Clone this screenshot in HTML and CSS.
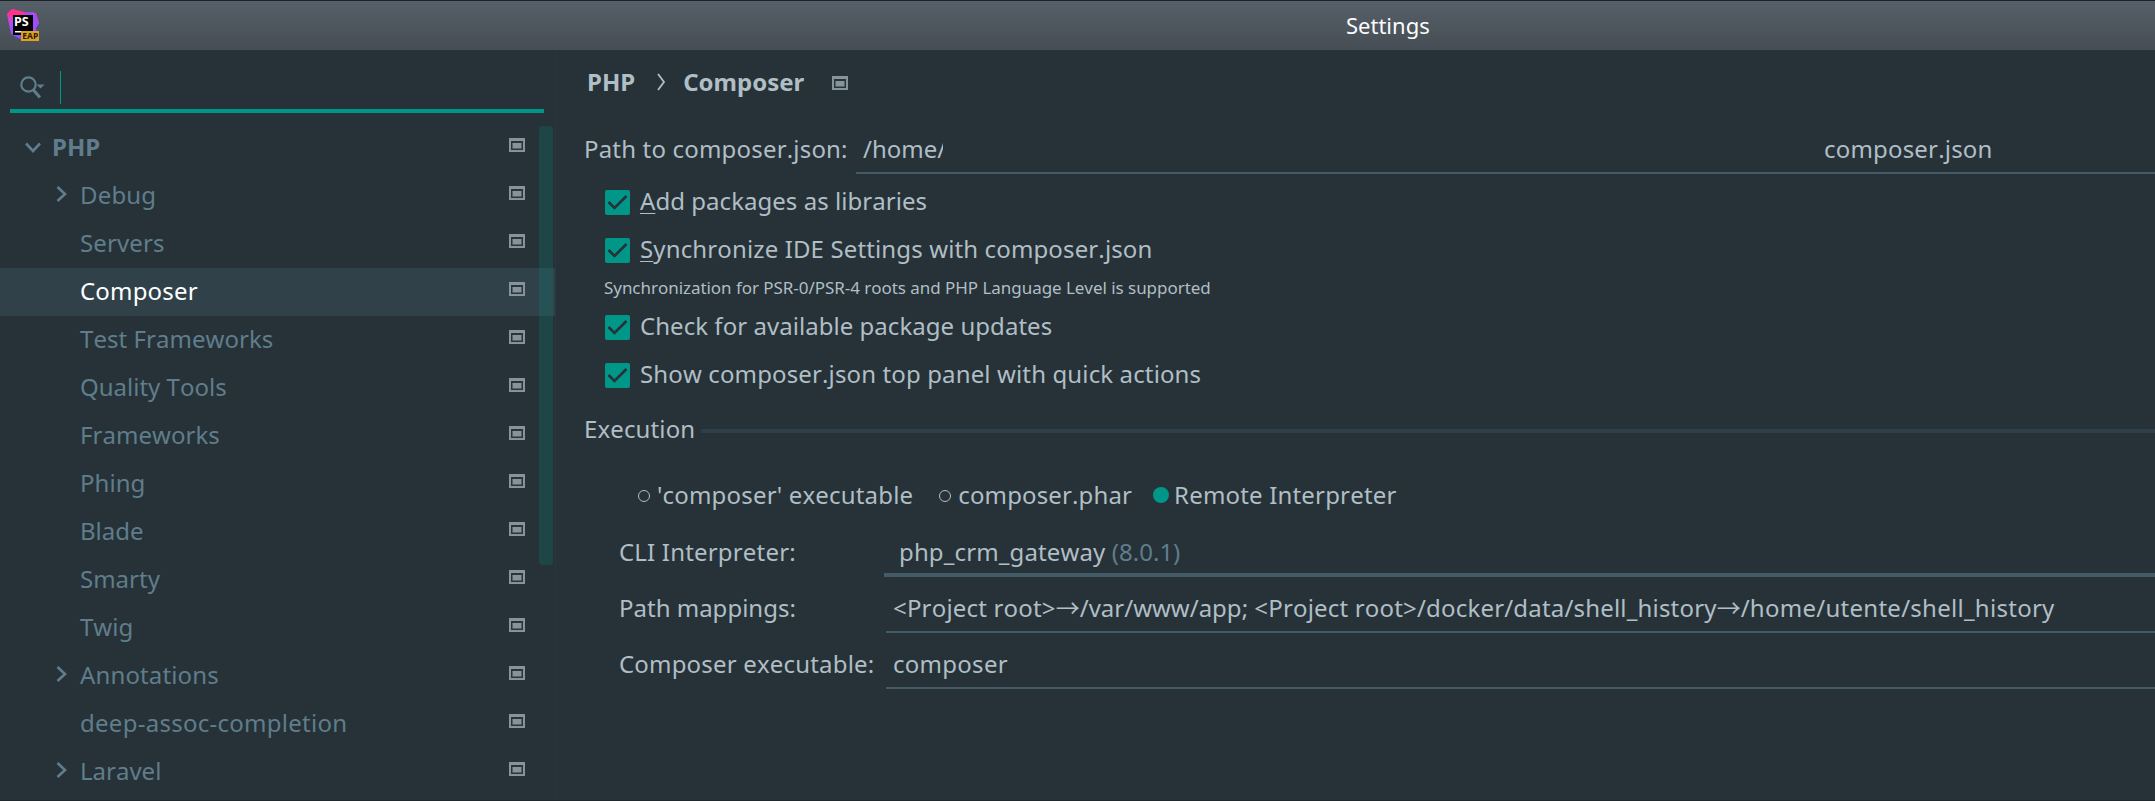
FILE: index.html
```
<!DOCTYPE html>
<html lang="en">
<head>
<meta charset="utf-8">
<title>Settings</title>
<link rel="stylesheet" href="styles.css">
</head>
<body>
<svg class="defs" width="0" height="0">
  <symbol id="module" viewBox="0 0 16 14"><path d="M0 0H16V14H0Z" fill="#87939a"/><path d="M2 3H14V12H2Z" fill="#27343a"/><path d="M3.5 5H12.5V10.5H3.5Z" fill="#87939a"/></symbol>
  <symbol id="right" viewBox="0 0 11 16"><path d="M1.5 1L9 8L1.5 15" fill="none" stroke="#607d8b" stroke-width="2.6"/></symbol>
  <symbol id="check" viewBox="0 0 25 25"><rect width="25" height="25" rx="2" fill="#009688"/><path d="M3.5 12L9.5 18L21.5 6" fill="none" stroke="#263238" stroke-width="2.6"/></symbol>
</svg>
<header class="titlebar">
  <svg class="logo" viewBox="0 0 34 34" width="34" height="34">
    <defs><linearGradient id="pink" x1="0" y1="0" x2="0" y2="1"><stop offset="0" stop-color="#ff318c"/><stop offset=".5" stop-color="#b74af7"/><stop offset="1" stop-color="#6b57ff"/></linearGradient></defs>
    <path d="M0 5L5 0L17 3L29 4L32 14L29 19L30 24L24 28L15 31L9 28L4 25Z" fill="url(#pink)"/>
    <path d="M18 4L27 3L32 14L28 18L28 24H18Z" fill="#a04dff"/>
    <path d="M0 5L5 0L17 3L10 10Z" fill="#ff318c"/>
    <rect x="6" y="6" width="20" height="20" fill="#000"/>
    <rect x="8" y="22" width="7" height="1.5" fill="#fff"/>
    <text x="7" y="17" class="logo-ps">PS</text>
    <rect x="14" y="22" width="18" height="10" fill="#dfa126"/>
    <text x="15.3" y="30.2" class="logo-eap">EAP</text>
  </svg>
  <h1 class="title">Settings</h1>
</header>
<div class="window">
  <aside class="sidebar">
    <div class="search">
      <svg width="26" height="24" viewBox="0 0 26 24"><circle cx="8.5" cy="8.5" r="7.2" fill="none" stroke="#607d8b" stroke-width="2.2"/><path d="M13 13.5L20 21.5" stroke="#607d8b" stroke-width="3"/><path d="M16.5 8.5H24.5L20.5 12.5Z" fill="#607d8b"/></svg>
      <span class="caret"></span>
    </div>
    <div class="tree-wrap">
      <ul class="tree">
        <li class="row root"><svg class="arrow" width="16" height="12" viewBox="0 0 16 12"><path d="M1 1.5L8 9L15 1.5" fill="none" stroke="#607d8b" stroke-width="2.6"/></svg><span>PHP</span><svg class="mod"><use href="#module"/></svg></li>
        <li class="row"><svg class="chev"><use href="#right"/></svg><span class="ls2">Debug</span><svg class="mod"><use href="#module"/></svg></li>
        <li class="row"><span class="ls1">Servers</span><svg class="mod"><use href="#module"/></svg></li>
        <li class="row selected"><span class="ls2">Composer</span><svg class="mod"><use href="#module"/></svg></li>
        <li class="row"><span class="ls0">Test Frameworks</span><svg class="mod"><use href="#module"/></svg></li>
        <li class="row"><span>Quality Tools</span><svg class="mod"><use href="#module"/></svg></li>
        <li class="row"><span class="ls0">Frameworks</span><svg class="mod"><use href="#module"/></svg></li>
        <li class="row"><span class="ls0">Phing</span><svg class="mod"><use href="#module"/></svg></li>
        <li class="row"><span>Blade</span><svg class="mod"><use href="#module"/></svg></li>
        <li class="row"><span>Smarty</span><svg class="mod"><use href="#module"/></svg></li>
        <li class="row"><span>Twig</span><svg class="mod"><use href="#module"/></svg></li>
        <li class="row"><svg class="chev"><use href="#right"/></svg><span class="ls1">Annotations</span><svg class="mod"><use href="#module"/></svg></li>
        <li class="row"><span class="ls3">deep-assoc-completion</span><svg class="mod"><use href="#module"/></svg></li>
        <li class="row"><svg class="chev"><use href="#right"/></svg><span>Laravel</span><svg class="mod"><use href="#module"/></svg></li>
      </ul>
      <div class="scroll-thumb"></div>
    </div>
  </aside>
  <main class="content">
    <nav class="crumbs"><span>PHP</span><svg width="9" height="18" viewBox="0 0 9 18"><path d="M1 1L7 9L1 17" fill="none" stroke="#b0bec5" stroke-width="1.8"/></svg><span>Composer</span><svg class="mod"><use href="#module"/></svg></nav>
    <div class="path-row"><label class="ls2">Path to composer.json:</label><div class="field path"><span class="home">/home/</span><span class="file ls2">composer.json</span></div></div>
    <div class="checks">
      <label class="check"><svg class="box"><use href="#check"/></svg><span class="ls0"><u>A</u>dd packages as libraries</span></label>
      <label class="check"><svg class="box"><use href="#check"/></svg><span class="ls1"><u>S</u>ynchronize IDE Settings with composer.json</span></label>
      <p class="hint">Synchronization for PSR-0/PSR-4 roots and PHP Language Level is supported</p>
      <label class="check"><svg class="box"><use href="#check"/></svg><span class="ls0">Check for available package updates</span></label>
      <label class="check"><svg class="box"><use href="#check"/></svg><span class="ls1">Show composer.json top panel with quick actions</span></label>
    </div>
    <div class="section"><h2 class="ls1">Execution</h2><hr></div>
    <div class="radios">
      <label class="ls2"><i class="radio"></i>'composer' executable</label>
      <label class="ls1"><i class="radio"></i>composer.phar</label>
      <label class="ls2"><i class="radio on"></i>Remote Interpreter</label>
    </div>
    <div class="form">
      <div class="form-row"><label class="ls2">CLI Interpreter:</label><div class="field select"><span class="ls1">php_crm_gateway </span><span class="version">(8.0.1)</span></div></div>
      <div class="form-row"><label>Path mappings:</label><div class="field"><span class="ls2">&lt;Project root&gt;</span><span class="to">→</span>/var/www/app; <span class="ls2">&lt;Project root&gt;/docker/data/shell_history</span><span class="to">→</span><span class="ls3">/home/utente/shell_history</span></div></div>
      <div class="form-row"><label class="ls2">Composer executable:</label><div class="field ls3">composer</div></div>
    </div>
  </main>
</div>
</body>
</html>
```
FILE: styles.css
```
* { box-sizing: border-box; margin: 0; padding: 0; }
body { width: 2155px; height: 801px; overflow: hidden; background: #263238; color: #b0bec5; font: 24px/33px "Noto Sans", sans-serif; font-kerning: none; white-space: nowrap; display: flex; flex-direction: column; }
.defs { position: absolute; }
.ls0 { letter-spacing: .04px; }
.ls1 { letter-spacing: .13px; }
.ls2 { letter-spacing: .18px; }
.ls3 { letter-spacing: .27px; }
.titlebar { height: 50px; flex: none; border-top: 1px solid #1c2127; background: linear-gradient(#566069, #464d54); display: flex; align-items: flex-start; }
.logo { margin: 8px 0 0 7px; flex: none; }
.logo-ps { font: bold 12.5px "Noto Sans", sans-serif; fill: #fff; }
.logo-eap { font: bold 8.5px "Noto Sans", sans-serif; fill: #2b1c00; }
.title { margin: 9px 0 0 1305px; font-size: 22px; line-height: 30px; font-weight: 400; color: #fcfcfc; }
.window { flex: 1; display: flex; min-height: 0; border-bottom: 1px solid #1f282d; }
.sidebar { width: 556px; flex: none; border-right: 1px solid #2a363d; display: flex; flex-direction: column; }
.search { width: 534px; height: 63px; margin-left: 10px; padding: 21px 0 0 10px; border-bottom: 4px solid #009688; display: flex; gap: 14px; }
.search svg { margin-top: 5px; }
.caret { width: 1px; height: 33px; background: #009688; }
.tree-wrap { position: relative; margin-top: 11px; }
.tree { list-style: none; }
.row { height: 48px; padding: 0 30px 4px 80px; display: flex; align-items: center; color: #607d8b; }
.row .mod { margin-left: auto; margin-top: -2px; }
.row .chev { margin: 0 13px 0 -24px; }
.root { padding-left: 25px; font-weight: 700; }
.root .arrow { margin: 3px 11px 0 0; }
.selected { background: #314149; color: #fff; }
.mod { width: 16px; height: 14px; flex: none; }
.chev { width: 11px; height: 16px; flex: none; }
.scroll-thumb { position: absolute; right: 2px; top: 2px; width: 14px; height: 439px; border-radius: 4px; background: rgba(0, 150, 136, .2); }
.content { flex: 1; min-width: 0; padding: 15px 0 0 28px; }
.crumbs { display: flex; align-items: center; margin-left: 3px; font-weight: 700; height: 33px; }
.crumbs svg:nth-child(2) { margin: 0 17px 0 22px; }
.crumbs .mod { margin: 2px 0 0 28px; }
.path-row { display: flex; margin-top: 27px; height: 49px; }
.path-row > label { margin-top: 7px; width: 272px; }
.field { flex: 1; border-bottom: 2px solid #425b67; padding-left: 7px; }
.path { display: flex; padding-top: 7px; }
.home { width: 80px; overflow: hidden; }
.file { margin-left: 881px; }
.checks { padding: 4px 0 0 20px; }
.check { display: flex; align-items: center; height: 48px; }
.check span { padding-bottom: 3px; }
.box { width: 25px; height: 25px; margin: 0 10px 0 1px; }
.check u { text-decoration-thickness: 1px; text-underline-offset: 3px; }
.hint { font-size: 17px; line-height: 27px; padding-bottom: 2px; letter-spacing: -.045px; }
.section { display: flex; align-items: center; margin-top: 13px; height: 33px; }
.section h2 { font-size: 24px; font-weight: 400; }
.section hr { flex: 1; border: 0; height: 4px; background: #2f3f48; margin: 4px 0 0 6px; }
.radios { display: flex; margin: 33px 0 0 53px; }
.radios label { display: flex; align-items: center; margin-right: 25px; }
.radios label:nth-child(2) { margin-right: 21px; }
.radio { width: 12px; height: 12px; border: 1.5px solid #b0bec5; border-radius: 50%; margin: 2px 7px 0 1px; }
.radio.on { width: 16px; height: 16px; border: 0; background: #009688; margin: 0 5px 0 0; }
.form { padding-left: 35px; margin-top: 20px; }
.form-row { display: flex; height: 56px; }
.form-row label { width: 267px; padding-top: 4px; }
.form-row .field { height: 46px; padding-top: 4px; }
.form-row .select { margin-left: -2px; padding-left: 15px; border-bottom-width: 4px; }
.version { color: #607d8b; }
.to { font-family: "Noto Sans CJK SC", sans-serif; line-height: 0; }
```
